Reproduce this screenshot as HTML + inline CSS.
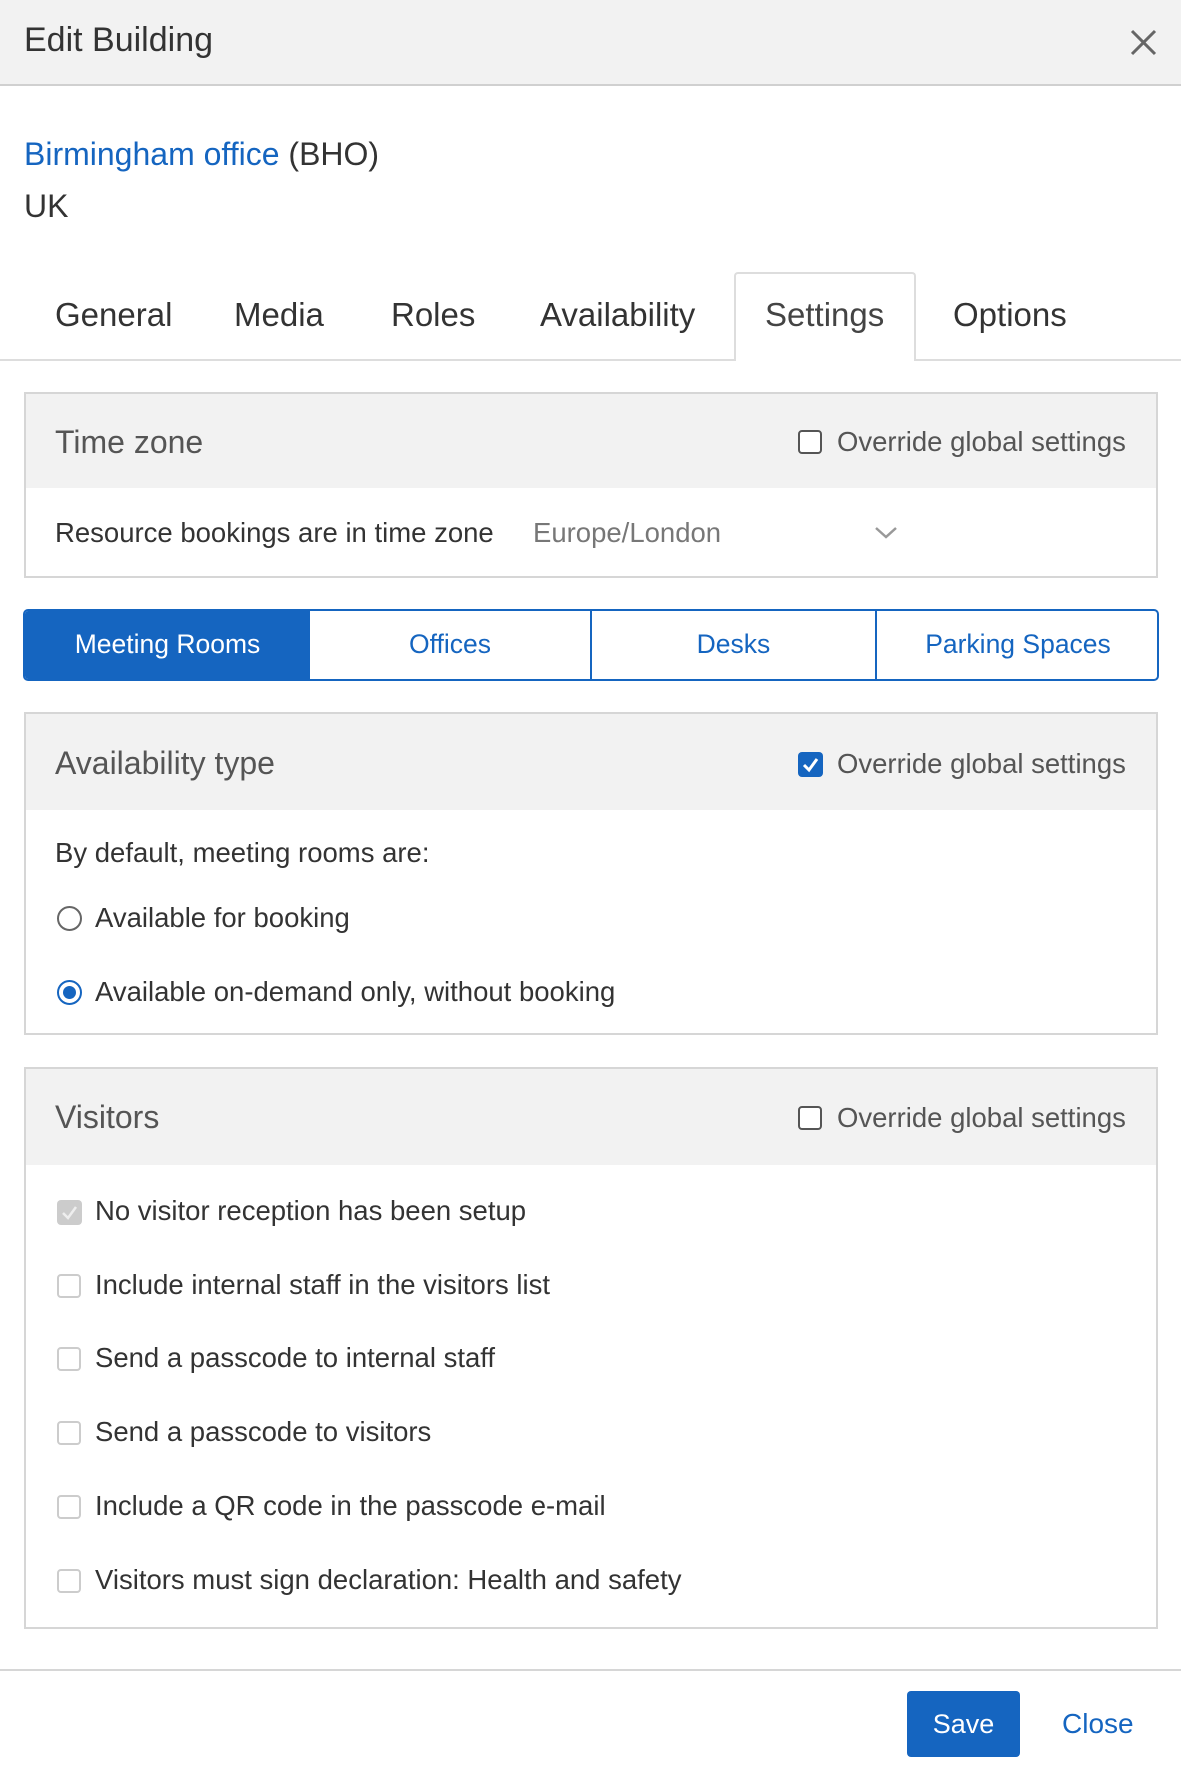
<!DOCTYPE html>
<html><head><meta charset="utf-8"><style>
*{box-sizing:border-box;margin:0;padding:0}
body{width:1181px;height:1770px;background:#fff;font-family:"Liberation Sans",Arial,sans-serif;color:#333;position:relative;overflow:hidden}
.a{position:absolute;white-space:nowrap}
.hdr{left:0;top:0;width:1181px;height:86px;background:#f2f2f2;border-bottom:2px solid #d0d0d0}
.panel{position:absolute;left:24px;width:1134px;border:2px solid #d6d6d6;background:#fff}
.ph{position:absolute;left:0;top:0;right:0;background:#f2f2f2}
.cb{position:absolute;width:24px;height:24px;border:2px solid #555;border-radius:4px;background:#fff}
.cbl{position:absolute;width:24px;height:24px;border:2px solid #ccc;border-radius:4px;background:#fff}
.t{font-size:27.5px;color:#333;margin-top:-2px}
.h{font-size:32px;color:#555;margin-top:-1px}
.tab{font-size:33px;color:#333;top:296px}
</style></head><body>
<div class="a hdr"></div>
<div class="a" style="left:24px;top:21px;font-size:34px;color:#333">Edit Building</div>
<svg class="a" style="left:1130px;top:29px" width="27" height="27" viewBox="0 0 27 27"><path d="M2 2L25 25M25 2L2 25" stroke="#666" stroke-width="3"/></svg>
<div class="a" style="left:24px;top:136px;font-size:32px"><span style="color:#1565c0">Birmingham office</span> (BHO)</div>
<div class="a" style="left:24px;top:188px;font-size:32px">UK</div>
<div class="a" style="left:0;top:359px;width:1181px;height:2px;background:#ddd"></div>
<div class="a" style="left:734px;top:272px;width:182px;height:89px;border:2px solid #ddd;border-bottom:none;border-radius:4px 4px 0 0;background:#fff"></div>
<div class="a tab" style="left:55px">General</div>
<div class="a tab" style="left:234px">Media</div>
<div class="a tab" style="left:391px">Roles</div>
<div class="a tab" style="left:540px">Availability</div>
<div class="a tab" style="left:765px;color:#444">Settings</div>
<div class="a tab" style="left:953px">Options</div>

<div class="panel" style="top:392px;height:186px">
 <div class="ph" style="height:94px"></div>
 <div class="a h" style="left:29px;top:31px">Time zone</div>
 <div class="cb" style="left:772px;top:36px"></div>
 <div class="a t" style="left:811px;top:34px;color:#555">Override global settings</div>
 <div class="a t" style="left:29px;top:125px">Resource bookings are in time zone</div>
 <div class="a t" style="left:507px;top:125px;color:#777">Europe/London</div>
 <svg class="a" style="left:848px;top:132px" width="24" height="14" viewBox="0 0 24 14"><path d="M2 2L12 11L22 2" stroke="#999" stroke-width="2.5" fill="none"/></svg>
</div>

<div class="a" style="left:23px;top:609px;width:1136px;height:72px;border:2px solid #1565c0;border-radius:5px;overflow:hidden">
 <div class="a" style="left:0;top:0;width:285px;height:68px;background:#1565c0"></div>
 <div class="a" style="left:283px;top:0;width:2px;height:68px;background:#1565c0"></div>
 <div class="a" style="left:565px;top:0;width:2px;height:68px;background:#1565c0"></div>
 <div class="a" style="left:850px;top:0;width:2px;height:68px;background:#1565c0"></div>
 <div style="position:absolute;left:0;top:18px;width:285px;text-align:center;color:#fff;font-size:26.5px">Meeting Rooms</div>
 <div style="position:absolute;left:285px;top:18px;width:280px;text-align:center;color:#1565c0;font-size:26.5px">Offices</div>
 <div style="position:absolute;left:567px;top:18px;width:283px;text-align:center;color:#1565c0;font-size:26.5px">Desks</div>
 <div style="position:absolute;left:852px;top:18px;width:282px;text-align:center;color:#1565c0;font-size:26.5px">Parking Spaces</div>
</div>

<div class="panel" style="top:712px;height:323px">
 <div class="ph" style="height:96px"></div>
 <div class="a h" style="left:29px;top:32px">Availability type</div>
 <div class="a" style="left:772px;top:38px;width:25px;height:25px;background:#1565c0;border-radius:4px"></div>
 <svg class="a" style="left:775px;top:41px" width="19" height="19" viewBox="0 0 19 19"><path d="M3 10L8 15L16 4" stroke="#fff" stroke-width="3" fill="none"/></svg>
 <div class="a t" style="left:811px;top:36px;color:#555">Override global settings</div>
 <div class="a t" style="left:29px;top:125px">By default, meeting rooms are:</div>
 <div class="a" style="left:31px;top:192px;width:25px;height:25px;border:2px solid #666;border-radius:50%"></div>
 <div class="a t" style="left:69px;top:190px">Available for booking</div>
 <div class="a" style="left:31px;top:266px;width:25px;height:25px;border:2px solid #1565c0;border-radius:50%"></div>
 <div class="a" style="left:37px;top:272px;width:13px;height:13px;background:#1565c0;border-radius:50%"></div>
 <div class="a t" style="left:69px;top:264px">Available on-demand only, without booking</div>
</div>

<div class="panel" style="top:1067px;height:562px">
 <div class="ph" style="height:96px"></div>
 <div class="a h" style="left:29px;top:31px">Visitors</div>
 <div class="cb" style="left:772px;top:37px"></div>
 <div class="a t" style="left:811px;top:35px;color:#555">Override global settings</div>
 <div class="a" style="left:31px;top:131px;width:25px;height:25px;background:#ccc;border-radius:4px"></div>
 <svg class="a" style="left:34px;top:134px" width="19" height="19" viewBox="0 0 19 19"><path d="M3 10L8 15L16 4" stroke="#eee" stroke-width="2.5" fill="none"/></svg>
 <div class="a t" style="left:69px;top:128px">No visitor reception has been setup</div>
 <div class="cbl" style="left:31px;top:205px"></div>
 <div class="a t" style="left:69px;top:202px">Include internal staff in the visitors list</div>
 <div class="cbl" style="left:31px;top:278px"></div>
 <div class="a t" style="left:69px;top:275px">Send a passcode to internal staff</div>
 <div class="cbl" style="left:31px;top:352px"></div>
 <div class="a t" style="left:69px;top:349px">Send a passcode to visitors</div>
 <div class="cbl" style="left:31px;top:426px"></div>
 <div class="a t" style="left:69px;top:423px">Include a QR code in the passcode e-mail</div>
 <div class="cbl" style="left:31px;top:500px"></div>
 <div class="a t" style="left:69px;top:497px">Visitors must sign declaration: Health and safety</div>
</div>

<div class="a" style="left:0;top:1669px;width:1181px;height:2px;background:#d6d6d6"></div>
<div class="a" style="left:907px;top:1691px;width:113px;height:66px;background:#1565c0;border-radius:4px;color:#fff;font-size:27px;text-align:center;line-height:66px">Save</div>
<div class="a" style="left:1062px;top:1708px;font-size:28px;color:#1565c0">Close</div>
</body></html>
